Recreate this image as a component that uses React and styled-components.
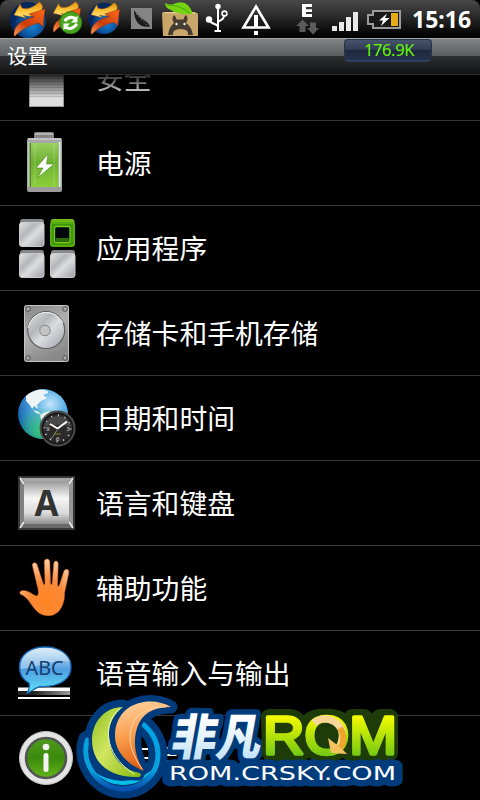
import styled, { createGlobalStyle } from "styled-components";

const GlobalStyle = createGlobalStyle`
  body {
    margin: 0;
    background: #000;
  }
`;
const Screen = styled.div`
  position: relative;
  width: 480px;
  height: 800px;
  overflow: hidden;
  display: flex;
  flex-direction: column;
  background: #000;
  color: #fff;
  font-family: "Noto Sans", "Noto Sans CJK SC", sans-serif;
`;
const StatusBar = styled.div`
  height: 38px;
  flex: none;
  display: flex;
  border-radius: 8px 8px 0 0;
  background: linear-gradient(#484848, #303030 35%, #0c0c0c 80%, #000);
`;
const StatusIcon = styled.svg`
  width: ${(p) => p.$w}px;
  height: 38px;
  flex: none;
  margin-left: ${(p) => p.$gap}px;
`;
const Clock = styled.div`
  margin-left: 11px;
  font-size: 23px;
  font-weight: 700;
  line-height: 39px;
`;
const TitleBar = styled.div`
  height: 37px;
  flex: none;
  box-sizing: border-box;
  display: flex;
  align-items: flex-start;
  justify-content: space-between;
  padding: 0 48px 0 7px;
  border-top: 1px solid #a4a6a6;
  border-bottom: 1px solid #2a2c2e;
  background: linear-gradient(#808384, #5c5f61 48%, #2d2f31 50%, #111214);
`;
const Title = styled.div`
  font-family: "Noto Sans CJK SC", sans-serif;
  font-size: 20.5px;
  line-height: 33px;
`;
const Speed = styled.div`
  width: 88px;
  height: 23px;
  box-sizing: border-box;
  border: 1px solid #26334a;
  border-bottom: 2px solid #2c4262;
  border-radius: 4px 4px 6px 6px;
  background: linear-gradient(#46536c, #303c54 48%, #1d2740 52%, #26314a);
  color: #66f800;
  font-size: 16.5px;
  letter-spacing: -0.4px;
  line-height: 20px;
  text-align: center;
  padding-left: 2px;
`;
const List = styled.div`
  flex: 1;
  min-height: 0;
  overflow: hidden;
`;
const Row = styled.div`
  height: 85px;
  box-sizing: border-box;
  display: flex;
  align-items: center;
  gap: 20px;
  padding-left: 16px;
  border-bottom: 1px solid #383838;

  /* the list is scrolled, the first row sits half under the title */
  &:first-child {
    margin-top: -39px;
    mask-image: linear-gradient(transparent 34px, #000 62px);
  }
`;
const RowIcon = styled.svg`
  width: 60px;
  height: 62px;
  flex: none;
  overflow: visible;
`;
const Label = styled.div`
  font-family: "Noto Sans CJK SC", sans-serif;
  font-size: 27.8px;
  line-height: 40px;
  padding-bottom: 2px;
  white-space: nowrap;
`;
const Watermark = styled.svg`
  position: absolute;
  left: 76px;
  bottom: 0;
  width: 330px;
  height: 110px;
`;

const Defs = () => (
  <svg width="0" height="0" style={{ position: "absolute" }}>
    <defs>
      <radialGradient id="ball" cx=".6" cy=".65">
        <stop offset="0" stopColor="#1a86d0" />
        <stop offset=".6" stopColor="#0b55a2" />
        <stop offset="1" stopColor="#06285e" />
      </radialGradient>
      <linearGradient id="gold" x2="0" y2="1">
        <stop offset="0" stopColor="#e08a10" />
        <stop offset=".6" stopColor="#ffc93c" />
        <stop offset="1" stopColor="#ffe48a" />
      </linearGradient>
      <linearGradient id="flame" x1="0" y1="1" x2="1" y2="0">
        <stop offset="0" stopColor="#ff9a50" />
        <stop offset=".4" stopColor="#c83c0c" />
        <stop offset="1" stopColor="#ff6a1c" />
      </linearGradient>
      <linearGradient id="silver" x2="1" y2="1">
        <stop offset="0" stopColor="#e4e4e6" />
        <stop offset=".35" stopColor="#b4b6b9" />
        <stop offset=".55" stopColor="#dcdde0" />
        <stop offset="1" stopColor="#9c9fa6" />
      </linearGradient>
      <linearGradient id="metal" x2="0" y2="1">
        <stop offset="0" stopColor="#9a9a9a" />
        <stop offset=".4" stopColor="#f6f6f6" />
        <stop offset=".75" stopColor="#dadada" />
        <stop offset="1" stopColor="#909090" />
      </linearGradient>
      <linearGradient id="green" x2="0" y2="1">
        <stop offset="0" stopColor="#9ad060" />
        <stop offset=".45" stopColor="#6cb030" />
        <stop offset="1" stopColor="#8ccf3c" />
      </linearGradient>
    </defs>
  </svg>
);

const Swift = () => (
  <g>
    <path
      d="M6 15 L12 4 L14 8 C20 10 26 7 31 2 C37 5 35 12 28 15 C23 17 17 16 15 15 L18 18 Z"
      fill="url(#gold)"
      stroke="#a86008"
      strokeWidth=".5"
    />
    <path
      d="M6 36 C5 26 13 20 26 17 L21 14 L37 9 L35 27 L31 23 C22 25 14 29 7 36 Z"
      fill="url(#flame)"
      stroke="#8c2c08"
      strokeWidth=".5"
    />
  </g>
);

const StatusIcons = () => (
  <>
    <StatusIcon $w={39} $gap={8} viewBox="0 0 39 38">
      <circle cx="20" cy="20" r="18" fill="url(#ball)" />
      <Swift />
    </StatusIcon>
    <StatusIcon $w={34} $gap={3} viewBox="0 0 34 38">
      <g transform="translate(-2 0) scale(.88)">
        <Swift />
      </g>
      <circle cx="20.7" cy="22.7" r="11" fill="#4aa51e" stroke="#2f7e10" />
      <path d="M14.500 21 Q20 15 26 19" fill="none" stroke="#fff" strokeWidth="3" />
      <path d="M27 24 Q21 31 15 27" fill="none" stroke="#fff" strokeWidth="3" />
      <path d="M27.500 15.500 V22.500 H21 Z M13.500 30 V23.500 H20 Z" fill="#fff" />
    </StatusIcon>
    <StatusIcon $w={34} $gap={3} viewBox="0 0 34 38">
      <g transform="translate(-1.5 1) scale(.92)">
        <circle cx="20" cy="19" r="17" fill="url(#ball)" />
        <Swift />
      </g>
    </StatusIcon>
    <StatusIcon $w={21} $gap={10} viewBox="0 0 21 38">
      <rect y="8" width="21" height="21" fill="#858585" />
      <path d="M3 10 C3 22 9 28 19 26.500 C17 21 11 20 7 15 Q4 12 3 10Z" fill="#1b1b1b" />
      <path d="M5 14 L16 25" stroke="#777" strokeDasharray="1.5 2" />
    </StatusIcon>
    <StatusIcon $w={36} $gap={10} viewBox="0 0 36 38">
      <path d="M0 13 L3 12 H32 L36 14 V36 H1Z" fill="#c9a66a" />
      <path d="M0 13 L3 12 H32 L36 14Z" fill="#e6cb92" />
      <path
        d="M6 35 Q7 27 12 23 Q9 18 12 15 Q14.500 17 14.500 19.500 H21.500 Q21.500 17 24 15 Q27 18 24 23 Q30 27 31 35 H26 Q27 29 18.500 29 Q10 29 11 35Z"
        fill="#473c31"
      />
      <circle cx="14.500" cy="24" r="1.200" fill="#eee" />
      <circle cx="22.500" cy="24" r="1.200" fill="#eee" />
      <path d="M3 3 Q9 6 14 3 Q26 -1 31 14 Q14 15 9 10 Q3 8 3 3Z" fill="#74d414" />
      <path d="M5 5 Q18 5 28 13" fill="none" stroke="#4ba50a" />
    </StatusIcon>
    <StatusIcon $w={23} $gap={7} viewBox="0 0 23 38" fill="none" stroke="#fff" strokeWidth="2">
      <path d="M13 7 V31 M13 27 C13 23 5 25 4 19 M13 23 C13 19 19 22 19 15" />
      <path d="M9.500 31 H16" />
      <circle cx="13" cy="6.500" r="2.700" fill="#fff" stroke="none" />
      <circle cx="4" cy="19.500" r="3.200" fill="#fff" stroke="none" />
      <circle cx="19.500" cy="13.500" r="2.400" strokeWidth="1.600" />
    </StatusIcon>
    <StatusIcon $w={32} $gap={12} viewBox="0 0 32 38">
      <path d="M16 6.500 L28.500 27.500 H3.500Z" fill="none" stroke="#fff" strokeWidth="2.600" />
      <path d="M14 15 h4 v13 h-4z M14 31 h4 v4 h-4z" fill="#fff" />
    </StatusIcon>
    <StatusIcon $w={23} $gap={24} viewBox="0 0 23 38">
      <path d="M6 4 H16 V7 H10 V9.200 H16 V12 H10 V14 H16 V17 H6Z" fill="#fff" />
      <path d="M6.500 19.500 L13 26 H9.500 V32 H3.500 V26 H0Z M17 34.500 L23 28 H20 V22.500 H14 V28 H11Z" fill="#5b5b5b" />
    </StatusIcon>
    <StatusIcon $w={27} $gap={13} viewBox="0 0 27 38" fill="#e8e8e8">
      <path d="M0 26 h5 v5 h-5z M7 22 h5 v9 h-5z M14 17 h5 v14 h-5z M21 12 h5 v19 h-5z" />
    </StatusIcon>
    <StatusIcon $w={34} $gap={8} viewBox="0 0 34 38">
      <path d="M6 11 H33 V28 H6 V24 H1 V15 H6Z" fill="#181818" stroke="#9b9b9b" strokeWidth="2" />
      <rect x="24" y="13" width="7" height="13" fill="#e5ac18" />
      <path d="M20 13.500 L12 20.500 H16 L14 26 L22.500 18 H18Z" fill="#fff" />
    </StatusIcon>
  </>
);

const LockIcon = () => (
  <RowIcon viewBox="0 0 60 62">
    <rect x="13" y="20" width="35" height="40" rx="1" fill="#dedede" />
    {[22, 25, 28, 31, 34, 37, 40, 43, 46, 49].map((y) => (
      <path key={y} d={`M13 ${y}.5 H48`} stroke="#c2c2c2" />
    ))}
    <path d="M13.500 20 V59.500 H47.500 V20" fill="none" stroke="#9a9a9a" />
  </RowIcon>
);

const PowerIcon = () => (
  <RowIcon viewBox="0 0 60 62">
    <path d="M18 7 V2 Q18 0 20 0 H36 Q38 0 38 2 V7Z" fill="#858585" />
    <path d="M19 2 H37" stroke="#ddd" />
    <rect x="11" y="6" width="35" height="53" rx="2" fill="#a7a7a7" />
    <path d="M12 7 H45" stroke="#ddd" />
    <rect x="13" y="11" width="31" height="44" fill="#537e34" />
    <rect x="15" y="11" width="27" height="44" fill="url(#green)" />
    <path d="M19 12 V54 M38 12 V54" stroke="#b8e08a" opacity=".5" />
    <path d="M43.500 10 V56" stroke="#e4eedd" strokeWidth="2" />
    <path d="M13 10 V56" stroke="#d5e8c8" />
    <path d="M11 55 H46 V58 Q46 60 43 60 H14 Q11 60 11 58Z" fill="#9c9c9c" />
    <path d="M32 22 L20 36 H27 L21.500 46 L38 32 H30.500Z" fill="#fff" stroke="#4c8420" strokeWidth=".6" />
  </RowIcon>
);

const AppsIcon = () => (
  <RowIcon viewBox="0 0 60 62">
    {[
      [3, 2],
      [3, 33],
      [34, 33],
    ].map(([x, y]) => (
      <g key={`${x}-${y}`}>
        <rect x={x + 1} y={y} width="24" height="20" rx="3" fill="#85888c" />
        <rect x={x + 0.5} y={y + 3.5} width="24.5" height="24" rx="2.5" fill="url(#silver)" stroke="#c9cbcf" />
      </g>
    ))}
    <rect x="34.500" y="2" width="24" height="20" rx="3" fill="#6fb81a" />
    <rect x="34" y="5" width="25" height="25" rx="3" fill="#3f9505" />
    <rect x="35" y="6" width="23" height="23" rx="2" fill="none" stroke="#6fc016" />
    <rect x="38.500" y="9.500" width="15.500" height="16" rx="2" fill="#02070c" stroke="#77cb20" strokeWidth="1.300" />
    <rect x="39.500" y="21" width="13.500" height="4" fill="#2b6c0a" />
  </RowIcon>
);

const DiskIcon = () => (
  <RowIcon viewBox="0 0 60 62">
    <linearGradient id="plate" x2=".4" y2="1">
      <stop offset="0" stopColor="#858585" />
      <stop offset=".5" stopColor="#b0b0b0" />
      <stop offset="1" stopColor="#8a8a8a" />
    </linearGradient>
    <rect x="8.500" y="3.500" width="44" height="56" rx="2" fill="url(#plate)" stroke="#c4c4c4" />
    <circle cx="30.200" cy="28" r="18.500" fill="url(#silver)" stroke="#5d5d5d" strokeWidth="1.200" />
    <path d="M12 26 A18.500 18.500 0 0 1 47 21" fill="none" stroke="#f1f1f1" />
    <circle cx="29" cy="28.500" r="5.300" fill="#c4c4c4" stroke="#858585" />
    {[
      [12, 7],
      [49, 7],
      [12, 56],
      [49, 56],
    ].map(([x, y]) => (
      <circle key={`${x}-${y}`} cx={x} cy={y} r="2.3" fill="#aaa" stroke="#505050" />
    ))}
  </RowIcon>
);

const GlobeIcon = () => (
  <RowIcon viewBox="0 0 60 62">
    <radialGradient id="globe" cx=".65" cy=".3" r=".75">
      <stop offset="0" stopColor="#c4e6fa" />
      <stop offset=".4" stopColor="#5aaee4" />
      <stop offset="1" stopColor="#0a5aa8" />
    </radialGradient>
    <radialGradient id="sea" cx=".45" cy=".85" r=".5">
      <stop offset="0" stopColor="#34c878" />
      <stop offset="1" stopColor="#46d878" stopOpacity="0" />
    </radialGradient>
    <circle cx="27" cy="27" r="25" fill="url(#globe)" />
    <circle cx="27" cy="27" r="25" fill="url(#sea)" />
    <path
      d="M10 9 Q16 3 26 2.500 Q33 3 32 6 L27 8 L31 11 L25 14 L21 18 L22 22 L18 19 L16 22 L20 26 L25 27 L23 25 L17 23 L13 17 L10 14Z"
      fill="#eef4f6"
    />
    <path d="M24 28 Q31 22 38 26 L33 36 L26 36Z" fill="#e2f2e6" />
    <circle cx="41.600" cy="41.500" r="17" fill="#151515" stroke="#4b4b4b" strokeWidth="2" />
    <circle cx="41.600" cy="41.500" r="14.500" fill="#2b2b2b" />
    <circle cx="41.600" cy="41.500" r="13" fill="none" stroke="#d8d8d8" strokeWidth="2" strokeDasharray="1 5.8" />
    <path d="M27.500 40 A14.500 14.500 0 0 1 55.700 40 Q42 36 27.500 40Z" fill="#666" opacity=".5" />
    <path d="M41.600 41.500 L34 37 M41.600 41.500 L51 34.500" stroke="#fff" strokeWidth="2" />
    <path d="M42 42 L35 52" stroke="#aaa" strokeWidth=".7" />
    <path d="M38 47 H45" stroke="#858513" />
    <g fill="#ddd" fontSize="6" fontFamily="Noto Sans, sans-serif" textAnchor="middle">
      <text x="41.600" y="53.500">6</text>
      <text x="32" y="44">9</text>
      <text x="52" y="44">3</text>
    </g>
  </RowIcon>
);

const KeyIcon = () => (
  <RowIcon viewBox="0 0 60 62">
    <rect x="2" y="4" width="57" height="54" fill="#363636" />
    <path d="M4 6 H57 L52 10 H9Z" fill="#a6a6a6" />
    <path d="M4 6 L9 10 V51 L4 56Z" fill="#808080" />
    <path d="M57 6 L52 10 V51 L57 56Z" fill="#969696" />
    <path d="M4 56 L9 51 H52 L57 56Z" fill="#6a6a6a" />
    <path d="M4 6 L8 12 M57 6 L53 12 M4 56 L8 50 M57 56 L53 50" stroke="#eee" strokeWidth="1.500" />
    <rect x="8" y="9" width="45" height="43" fill="url(#metal)" />
    <text
      x="18.500"
      y="43.500"
      textLength="24"
      lengthAdjust="spacingAndGlyphs"
      fontFamily="Noto Sans, sans-serif"
      fontWeight="700"
      fontSize="36"
      fill="#333"
    >
      A
    </text>
  </RowIcon>
);

const HandIcon = () => (
  <RowIcon viewBox="0 0 60 62">
    <radialGradient id="skin" cx=".55" cy=".75" r=".75">
      <stop offset="0" stopColor="#ff8420" />
      <stop offset=".5" stopColor="#f98b3c" />
      <stop offset="1" stopColor="#ffd0a8" />
    </radialGradient>
    <path
      d="M5 34 C9 32 15 36 19 38.500 C22 40 23 37 22 32 L16.500 9 C15.500 5.500 20 4.500 21.200 8 L27 26 C28 28.500 29 28 29 26 L28.300 5 C28.300 1 33.700 1 33.800 5 L34.500 26 C34.800 28 36 28 36.200 26 L37.800 6.500 C38.200 3 42.300 3.500 42.200 7 L41.500 27 C41.500 30 43 30 43.800 27 L47.800 14.500 C49.200 11 53.500 12 52.800 16 L48.500 36 C49 46 44 58.700 32.500 58.700 C22 58.700 18 51 13 44 C11 41.500 8 38.500 5 37.500 C3.500 36.500 3.500 35 5 34Z"
      fill="url(#skin)"
      stroke="#d8651c"
      strokeWidth=".5"
    />
  </RowIcon>
);

const SpeechIcon = () => (
  <RowIcon viewBox="0 0 60 62">
    <linearGradient id="bubble" x2="0" y2="1">
      <stop offset="0" stopColor="#d4e8f8" />
      <stop offset=".5" stopColor="#4f9ee0" />
      <stop offset="1" stopColor="#5fe4f8" />
    </linearGradient>
    <linearGradient id="shade" x2="1" y2="0">
      <stop offset=".3" stopColor="#222" />
      <stop offset="1" stopColor="#999" />
    </linearGradient>
    <path d="M2 49 H54 V53 H2Z" fill="url(#shade)" />
    <path d="M2 45.500 H54 V49 H2Z M2 55 H54 V57 H2Z" fill="#fff" />
    <path
      d="M29 5 C44 5 55 13 55 25 C55 38 42 45 26 44.500 C20 44 16 50 11 51 C13 48 14 45 13 41 C6 37 3.500 32 3.500 25 C3.500 13 14 5 29 5Z"
      fill="url(#bubble)"
      stroke="#1768b4"
      strokeWidth="1.300"
    />
    <path d="M29 6 C43 6 52 12 54 20 C40 16 26 24 5 27 C4 14 14 6 29 6Z" fill="#fff" opacity=".3" />
    <text
      x="9.500"
      y="33"
      textLength="38"
      lengthAdjust="spacingAndGlyphs"
      fontFamily="Noto Sans, sans-serif"
      fontSize="20.500"
      fill="#103e70"
    >
      ABC
    </text>
  </RowIcon>
);

const InfoIcon = () => (
  <RowIcon viewBox="0 0 60 62">
    <linearGradient id="info" x2="0" y2="1">
      <stop offset="0" stopColor="#4f9a20" />
      <stop offset=".5" stopColor="#3b8a0c" />
      <stop offset="1" stopColor="#62b41c" />
    </linearGradient>
    <circle cx="30" cy="31" r="26.500" fill="#e4e4e4" stroke="#c2c2c2" />
    <circle cx="30" cy="31" r="20" fill="url(#info)" stroke="#545454" strokeWidth="2.500" />
    <circle cx="30" cy="20" r="3.300" fill="#f4f4f4" />
    <rect x="27.500" y="26" width="5" height="19" rx="2.500" fill="#f4f4f4" />
  </RowIcon>
);

const RING = "M11.500 50 C4 72 22 99 46.500 99 C68 99 82 83 82 64 C82 54 77 43 68 35";
const LEAF =
  "M47 17 C28 17 16 33 16 50 C16 72 32 88 63 87 Q66 86 64 83 C46 80 34 66 33 48 C32 34 38 24 47 17Z";
const HORN = "M95 17 C75 5 39 12 39 46 C39 62 52 75 68 81 C58 66 56 48 63 33 C70 20 82 17 95 17Z";

const Logo = () => (
  <Watermark viewBox="0 0 330 110" strokeLinejoin="round" strokeLinecap="round">
    <defs>
      <linearGradient id="leaf" x2="1" y2="1">
        <stop offset="0" stopColor="#8cc020" />
        <stop offset=".45" stopColor="#d2e660" />
        <stop offset="1" stopColor="#86b810" />
      </linearGradient>
      <linearGradient id="horn" x1=".3" y1="0" x2=".5" y2="1">
        <stop offset="0" stopColor="#ffd09a" />
        <stop offset=".5" stopColor="#f99a48" />
        <stop offset="1" stopColor="#d9560c" />
      </linearGradient>
      <linearGradient id="ring" x2="0" y2="1">
        <stop offset="0" stopColor="#00a4e4" />
        <stop offset=".7" stopColor="#0aa0dc" />
        <stop offset="1" stopColor="#0a50b0" />
      </linearGradient>
      <linearGradient id="ice" x2="0" y2="1">
        <stop offset=".3" stopColor="#fff" />
        <stop offset="1" stopColor="#b4dcf6" />
      </linearGradient>
      <linearGradient id="lime" gradientUnits="userSpaceOnUse" x1="0" y1="25" x2="0" y2="66">
        <stop offset=".05" stopColor="#f2fa00" />
        <stop offset="1" stopColor="#72c814" />
      </linearGradient>
    </defs>

    {/* swirl */}
    <g fill="#003c7c" stroke="#003c7c">
      <path d={RING} fill="none" strokeWidth="19" />
      <path d={LEAF} strokeWidth="15" />
      <path d={HORN} strokeWidth="13" />
    </g>
    <path d={RING} fill="none" stroke="url(#ring)" strokeWidth="5" />
    <path d="M17 81 Q31 95 46 95 Q66 95 76 80 Q62 91 46 91 Q29 90 17 81Z" fill="#08bce8" />
    <g stroke="#003c7c" strokeWidth="7" paintOrder="stroke">
      <path d={LEAF} fill="url(#leaf)" />
      <path d={HORN} fill="url(#horn)" />
    </g>
    <path d="M44 19 C27 30 26 64 58 84" fill="none" stroke="#eef6b8" />
    <path d="M89 17 C62 15 39 40 66 79" fill="none" stroke="#ffd8b0" />

    {/* name */}
    <text
      x="94"
      y="65"
      fontFamily="Noto Sans CJK SC, sans-serif"
      fontWeight="900"
      fontSize="49"
      textLength="90"
      lengthAdjust="spacingAndGlyphs"
      transform="translate(11 0) skewX(-10)"
      fill="url(#ice)"
      stroke="#003c7c"
      strokeWidth="11"
      paintOrder="stroke"
    >
      非凡
    </text>
    <path
      d="M193 27 H213 Q222 27 223 36 L226 63 H194Z M249 27 C282 24 280 64 250 64 C220 64 220 24 249 27Z M276 27 H288 L295 34 L304 27 H314 V63 H274Z"
      fill="#1e3c08"
      stroke="#1e3c08"
      strokeWidth="16"
    />
    <text
      x="187"
      y="64"
      fontFamily="Liberation Sans, sans-serif"
      fontSize="54"
      textLength="134"
      lengthAdjust="spacingAndGlyphs"
      fill="url(#lime)"
      stroke="url(#lime)"
      strokeWidth="3.500"
    >
      ROM
    </text>
    <path d="M238 33 Q247 26 257 31 Q271 38 264 56" fill="none" stroke="#f8d698" strokeWidth="7" strokeLinecap="butt" />
    <path d="M264 38 Q270 46 265 58" fill="none" stroke="#eda62c" strokeWidth="6" strokeLinecap="butt" />
    <path d="M252 48 L255 63 L271 64 L264 57 Z" fill="#f4c060" />
    <text
      x="93"
      y="90"
      fontFamily="DejaVu Sans, sans-serif"
      fontSize="19"
      textLength="227"
      lengthAdjust="spacingAndGlyphs"
      fill="#fff"
      stroke="#003c7c"
      strokeWidth="13"
      paintOrder="stroke"
    >
      ROM.CRSKY.COM
    </text>
  </Watermark>
);

const items = [
  { label: "安全", Icon: LockIcon },
  { label: "电源", Icon: PowerIcon },
  { label: "应用程序", Icon: AppsIcon },
  { label: "存储卡和手机存储", Icon: DiskIcon },
  { label: "日期和时间", Icon: GlobeIcon },
  { label: "语言和键盘", Icon: KeyIcon },
  { label: "辅助功能", Icon: HandIcon },
  { label: "语音输入与输出", Icon: SpeechIcon },
  { label: "关于手机", Icon: InfoIcon },
];

export default function App() {
  return (
    <Screen>
      <GlobalStyle />
      <Defs />
      <StatusBar>
        <StatusIcons />
        <Clock>15:16</Clock>
      </StatusBar>
      <TitleBar>
        <Title>设置</Title>
        <Speed>176.9K</Speed>
      </TitleBar>
      <List>
        {items.map(({ label, Icon }) => (
          <Row key={label}>
            <Icon />
            <Label>{label}</Label>
          </Row>
        ))}
      </List>
      <Logo />
    </Screen>
  );
}
